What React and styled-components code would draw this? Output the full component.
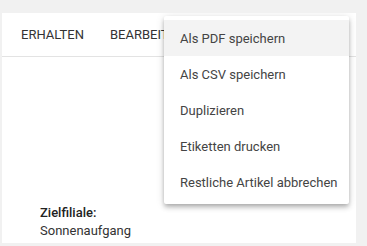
import React from "react";
import styled, { createGlobalStyle } from "styled-components";

const Global = createGlobalStyle`
  html, body { margin: 0; padding: 0; background: #f1f1f1; }
  body { font-family: Roboto, "Noto Sans", Arial, sans-serif; }
  * { box-sizing: border-box; }
`;

const Page = styled.div`
  width: 367px;
  height: 246px;
  padding: 13px 11px 3px 2px;
  display: flex;
`;

const Card = styled.div`
  position: relative;
  flex: 1;
  background: #fff;
  display: flex;
  flex-direction: column;
  overflow: hidden;
`;

const TabBar = styled.div`
  height: 44px;
  display: flex;
  align-items: center;
  padding-left: 6px;
  border-bottom: 1px solid #e3e3e3;
  flex-shrink: 0;
`;

const Tab = styled.div`
  padding: 0 13px;
  font-size: 13px;
  color: #333;
  text-transform: uppercase;
  white-space: nowrap;
  line-height: 43px;
`;

const Content = styled.div`
  flex: 1;
  display: flex;
  flex-direction: column;
  justify-content: flex-end;
  padding: 0 0 3px 38px;
`;

const Label = styled.div`
  font-size: 13px;
  line-height: 18px;
  font-weight: 500;
  color: #222;
`;

const Value = styled.div`
  font-size: 13px;
  line-height: 18px;
  color: #333;
`;

const Menu = styled.div`
  position: absolute;
  left: 162px;
  top: 3px;
  width: 185px;
  padding: 4px 0;
  background: #fff;
  box-shadow: 0 2px 4px -1px rgba(0,0,0,0.2), 0 4px 5px 0 rgba(0,0,0,0.14), 0 1px 10px 0 rgba(0,0,0,0.12);
  border-radius: 2px;
`;

const MenuItem = styled.div`
  height: 36px;
  display: flex;
  align-items: center;
  padding: 0 16px;
  font-size: 13px;
  color: #444;
  white-space: nowrap;
  background: ${(p) => (p.$active ? "#f3f3f3" : "transparent")};
`;

const items = [
  "Als PDF speichern",
  "Als CSV speichern",
  "Duplizieren",
  "Etiketten drucken",
  "Restliche Artikel abbrechen",
];

export default function App() {
  return (
    <>
      <Global />
      <Page>
        <Card>
          <TabBar>
            <Tab>Erhalten</Tab>
            <Tab>Bearbeiten</Tab>
          </TabBar>
          <Content>
            <Label>Zielfiliale:</Label>
            <Value>Sonnenaufgang</Value>
          </Content>
          <Menu>
            {items.map((t, i) => (
              <MenuItem key={t} $active={i === 0}>
                {t}
              </MenuItem>
            ))}
          </Menu>
        </Card>
      </Page>
    </>
  );
}
